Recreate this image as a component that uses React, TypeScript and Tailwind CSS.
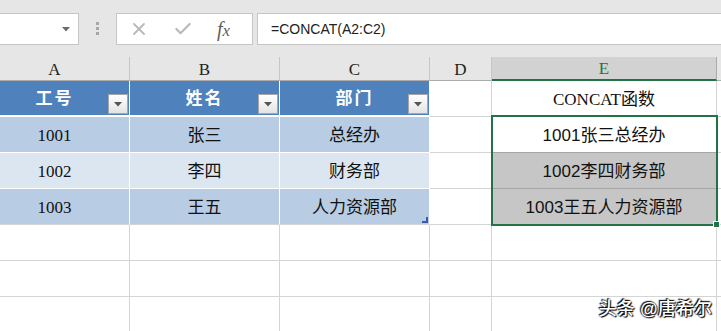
import React from 'react'
import { X, Check } from 'lucide-react'

const cols = [
  { key: 'A', w: 'w-[150px]' },
  { key: 'B', w: 'w-[150px]' },
  { key: 'C', w: 'w-[150px]' },
  { key: 'D', w: 'w-[62px]' },
  { key: 'E', w: 'w-[225px]' },
  { key: 'F', w: 'w-[60px]' },
]

const people = [
  { id: '1001', name: '张三', dept: '总经办', band: 'bg-[#b8cce4]', eBg: 'bg-white' },
  { id: '1002', name: '李四', dept: '财务部', band: 'bg-[#dce6f1]', eBg: 'bg-[#c6c6c6]' },
  { id: '1003', name: '王五', dept: '人力资源部', band: 'bg-[#b8cce4]', eBg: 'bg-[#c6c6c6]' },
]

const serif = "font-[family-name:'Liberation_Serif','Noto_Sans_CJK_SC',serif]"
const sans = "font-[family-name:'Liberation_Sans','Noto_Sans_CJK_SC',sans-serif]"

function FilterButton() {
  return (
    <div className="absolute right-[1px] bottom-[1px] w-[20px] h-[20px] border border-[#a6a6a6] bg-gradient-to-b from-white to-[#e4e4e4] flex items-center justify-center">
      <svg width="8" height="5" viewBox="0 0 8 5">
        <path d="M0 0h8L4 4.5z" fill="#555" />
      </svg>
    </div>
  )
}

function EmptyRow({ last }: { last?: boolean }) {
  return (
    <div className="flex h-[36px]">
      {cols.map((c) => (
        <div
          key={c.key}
          className={`${c.w} shrink-0 border-r border-[#d4d4d4] ${last ? '' : 'border-b'} bg-white`}
        />
      ))}
    </div>
  )
}

export default function App() {
  return (
    <div className="relative w-[721px] h-[331px] overflow-hidden bg-white">
      {/* Formula bar */}
      <div className={`h-[57px] bg-[#e6e6e6] flex items-start pt-[13px] ${sans}`}>
        <div className="w-[79px] h-[32px] bg-white border border-l-0 border-[#c6c6c6] flex items-center justify-end pr-[8px]">
          <svg width="8" height="5" viewBox="0 0 8 5">
            <path d="M0 0h8L4 4.5z" fill="#6b6b6b" />
          </svg>
        </div>
        <div className="ml-[17px] mt-[9px] flex flex-col gap-[2px]">
          <div className="w-[3px] h-[3px] bg-[#a6a6a6]" />
          <div className="w-[3px] h-[3px] bg-[#a6a6a6]" />
          <div className="w-[3px] h-[3px] bg-[#a6a6a6]" />
        </div>
        <div className="ml-[17px] w-[137px] h-[32px] bg-white border border-[#c6c6c6] flex items-center pl-[12px]">
          <X className="w-[20px] h-[20px] text-[#b9b9b9]" strokeWidth={2.2} />
          <Check className="ml-[24px] w-[20px] h-[20px] text-[#b9b9b9]" strokeWidth={2.6} />
          <span className="ml-[24px] text-[20px] italic text-[#5f5f5f] font-[family-name:'Liberation_Serif',serif] leading-none">
            f<span className="text-[17px]">x</span>
          </span>
        </div>
        <div className="ml-[4px] flex-1 h-[32px] bg-white border border-r-0 border-[#c6c6c6] flex items-center pl-[13px] text-[14px] text-[#222]">
          =CONCAT(A2:C2)
        </div>
      </div>

      {/* Sheet */}
      <div className="ml-[-20px]">
        {/* Column letters */}
        <div className={`flex h-[24px] ${serif} text-[17px]`}>
          {cols.map((c) => {
            const sel = c.key === 'E'
            return (
              <div
                key={c.key}
                className={`${c.w} shrink-0 flex items-center justify-center pt-[2px] border-r ${
                  sel
                    ? 'bg-[#d2d2d2] text-[#217346] border-[#ababab] border-b-2 border-b-[#217346]'
                    : 'bg-[#e6e6e6] text-[#222] border-[#c6c6c6] border-b border-b-[#ababab]'
                }`}
              >
                {c.key === 'F' ? '' : c.key}
              </div>
            )
          })}
        </div>

        {/* Header row */}
        <div className={`flex h-[36px] ${serif} text-[17px]`}>
          {['工号', '姓名', '部门'].map((t, i) => (
            <div
              key={t}
              className={`${cols[i].w} shrink-0 relative bg-[#4f81bd] border-r border-white border-b-2 flex items-center justify-center pt-[1px] text-white font-bold tracking-[2px]`}
            >
              {t}
              <FilterButton />
            </div>
          ))}
          <div className="w-[62px] shrink-0 border-r border-b border-[#d4d4d4]" />
          <div className="w-[225px] shrink-0 border-r border-b border-[#d4d4d4] flex items-center justify-center pt-[2px] text-[#111]">
            CONCAT函数
          </div>
          <div className="w-[60px] shrink-0 border-b border-[#d4d4d4]" />
        </div>

        {/* Data rows */}
        {people.map((p, idx) => (
          <div key={p.id} className="flex h-[36px] text-[17px] text-[#111]">
            {[p.id, p.name, p.dept].map((t, i) => (
              <div
                key={i}
                className={`${cols[i].w} shrink-0 relative ${p.band} border-r border-b ${
                  idx === 2 ? 'border-b-[#d4d4d4]' : 'border-b-white'
                } border-r-white flex items-center justify-center pt-[2px] ${serif}`}
              >
                {t}
                {idx === 2 && i === 2 && (
                  <svg className="absolute right-[1px] bottom-[1px]" width="6" height="6" viewBox="0 0 6 6">
                    <path d="M6 0v6H0V4h4V0z" fill="#3c5aa8" />
                  </svg>
                )}
              </div>
            ))}
            <div className="w-[62px] shrink-0 border-r border-b border-[#d4d4d4]" />
            <div
              className={`w-[225px] shrink-0 ${p.eBg} border-r border-b border-[#a6a6a6] flex items-center justify-center pt-[2px] ${sans}`}
            >
              {p.id}
              {p.name}
              {p.dept}
            </div>
            <div className="w-[60px] shrink-0 border-b border-[#d4d4d4]" />
          </div>
        ))}

        <EmptyRow />
        <EmptyRow />
        <EmptyRow last />
      </div>

      {/* Selection overlay */}
      <div className="absolute left-[491px] top-[115px] w-[227px] h-[111px] border-2 border-[#217346] pointer-events-none" />
      <div className="absolute left-[713px] top-[221px] w-[7px] h-[7px] bg-[#217346] border border-white" />

      {/* Watermark */}
      <div
        className={`absolute right-[9px] bottom-[8px] text-[18px] text-white font-medium ${sans} [text-shadow:0_0_2px_#000,1px_1px_1px_#000,-1px_-1px_1px_#000]`}
      >
        头条 @唐希尔
      </div>
    </div>
  )
}
